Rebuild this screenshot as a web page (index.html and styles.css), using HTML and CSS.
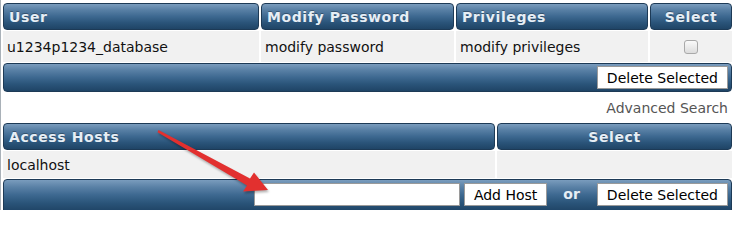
FILE: index.html
```html
<!DOCTYPE html>
<html>
<head>
<meta charset="utf-8">
<link rel="stylesheet" href="styles.css">
</head>
<body>
<div class="page">
  <div class="grid users">
    <div class="th">User</div>
    <div class="th">Modify Password</div>
    <div class="th">Privileges</div>
    <div class="th center">Select</div>
    <div class="td">u1234p1234_database</div>
    <div class="td">modify password</div>
    <div class="td">modify privileges</div>
    <div class="td center"><span class="check"></span></div>
    <div class="tf"><button class="btn">Delete Selected</button></div>
  </div>
  <div class="adv">Advanced Search</div>
  <div class="grid hosts">
    <div class="th">Access Hosts</div>
    <div class="th center">Select</div>
    <div class="td">localhost</div>
    <div class="td"></div>
    <div class="tf tall">
      <input class="field" type="text">
      <button class="btn add">Add Host</button>
      <span class="or">or</span>
      <button class="btn">Delete Selected</button>
    </div>
  </div>
  <svg class="arrow" width="735" height="210" viewBox="0 0 735 210">
    <polygon points="158.5,130 250,178.4 254,172.5 268,190 243,191.5 247,185.6 157.5,132.2" fill="#e2302f"/>
  </svg>
</div>
</body>
</html>
```

FILE: styles.css
```css
html, body {
  margin: 0;
  padding: 0;
  background: #fff;
  overflow: hidden;
}
body {
  font-family: "DejaVu Sans", Verdana, sans-serif;
  font-size: 14px;
  color: #111;
}
.page {
  position: relative;
  width: 733px;
  height: 210px;
  overflow: hidden;
  border-left: 1px solid #a9b1b8;
  padding: 3px 0 0 2px;
  box-sizing: border-box;
}
.grid {
  display: grid;
  column-gap: 2px;
  row-gap: 1px;
  width: 729px;
}
.users {
  grid-template-columns: 256px 193px 192px 82px;
  grid-template-rows: 27px 31px 29px;
}
.hosts {
  grid-template-columns: 492px 235px;
  grid-template-rows: 27px 27px 44px;
}
.th, .tf {
  background: linear-gradient(#7a9cbd 0%, #5a81a6 22%, #3d6890 50%, #2a5479 75%, #1f4466 100%);
  border: 1px solid #1d3a56;
  border-radius: 4px;
  box-sizing: border-box;
}
.th {
  color: #e6eef5;
  font-weight: bold;
  letter-spacing: 0.6px;
  padding-left: 5px;
  display: flex;
  align-items: center;
  text-shadow: 0 -1px 0 rgba(0,0,0,0.3);
}
.th.center {
  justify-content: center;
  padding-left: 0;
}
.td {
  background: #f1f1f1;
  padding-left: 4px;
  display: flex;
  align-items: center;
}
.td.center {
  justify-content: center;
  padding-left: 0;
}
.check {
  width: 12px;
  height: 12px;
  border: 1px solid #a9a9a9;
  border-radius: 3px;
  background: linear-gradient(#fafafa, #dcdcdc);
}
.tf {
  grid-column: 1 / -1;
  display: flex;
  align-items: center;
  justify-content: flex-end;
  padding-right: 3px;
}
.tf.tall {
  align-items: flex-start;
  padding-top: 3px;
  background: linear-gradient(#7a9cbd 0px, #5a81a6 7px, #3d6890 15px, #2a5479 23px, #1f4466 31px, #1f4466 100%);
}
.btn {
  font-family: "DejaVu Sans", Verdana, sans-serif;
  font-size: 14px;
  color: #000;
  background: #fff;
  border: 1px solid #9a9a9a;
  height: 23px;
  padding: 0 9px;
  margin: 0;
  line-height: 20px;
}
.field {
  width: 206px;
  height: 23px;
  box-sizing: border-box;
  border: 1px solid #9a9a9a;
  background: #fff;
  margin: 0;
}
.add {
  margin-left: 4px;
}
.or {
  color: #e6eef5;
  font-weight: bold;
  line-height: 23px;
  margin: 0 17px 0 16px;
}
.adv {
  height: 31px;
  display: flex;
  align-items: center;
  justify-content: flex-end;
  width: 725px;
  color: #555;
}
.arrow {
  position: absolute;
  left: -1px;
  top: 0;
  filter: drop-shadow(1px 2px 1px rgba(0,0,0,0.3));
}
```
